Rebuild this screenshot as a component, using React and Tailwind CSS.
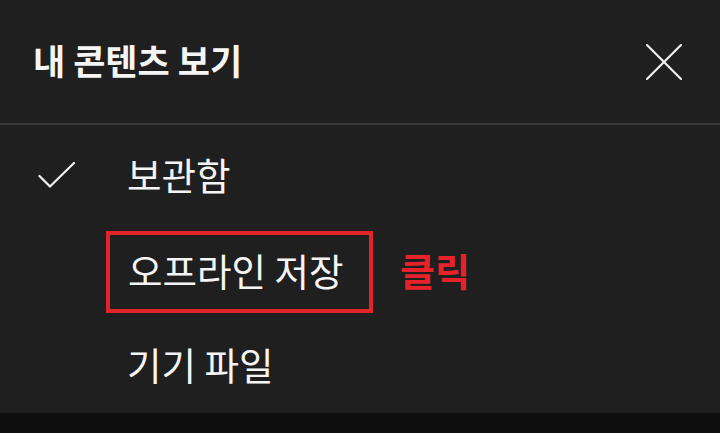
export default function App() {
  const font = { fontFamily: '"Noto Sans CJK KR", "Noto Sans", sans-serif' };
  return (
    <div className="w-[720px] h-[433px] flex flex-col bg-[#0e0e0e] overflow-hidden" style={font}>
      <div className="h-[413px] flex flex-col bg-[#1f1f1f]">
        <div className="h-[123px] flex items-center justify-between pl-[33px] pr-[38px]">
          <div className="text-[35px] font-bold text-[#f5f5f5] leading-none pb-[5px]">내 콘텐츠 보기</div>
          <svg width="36" height="36" viewBox="0 0 36 36" className="text-[#f0f0f0]">
            <path d="M1 1 L35 35 M35 1 L1 35" stroke="currentColor" strokeWidth="2.2" strokeLinecap="round" fill="none" />
          </svg>
        </div>
        <div className="h-[2px] bg-[#3a3a3a]" />
        <div className="flex flex-col pt-[3px]">
          <div className="h-[96px] flex items-center">
            <div className="w-[106px] flex items-center pl-[38px]">
              <svg width="38" height="28" viewBox="0 0 38 28" className="text-[#f0f0f0]">
                <path d="M1.5 14 L12 24.5 L36 1" stroke="currentColor" strokeWidth="2.2" strokeLinecap="round" strokeLinejoin="round" fill="none" />
              </svg>
            </div>
            <div className="pl-[21px] pb-[5px] text-[37.5px] text-[#f5f5f5] leading-none">보관함</div>
          </div>
          <div className="h-[96px] flex items-center">
            <div className="w-[106px]" />
            <div className="w-[267px] h-[82px] border-4 border-[#e3222a] flex items-center pl-[18px] pb-[5px] text-[37.5px] text-[#f5f5f5] leading-none">
              오프라인 저장
            </div>
            <div className="ml-[27px] pb-[5px] text-[38px] font-bold text-[#e8222b] leading-none">클릭</div>
          </div>
          <div className="h-[93px] flex items-center">
            <div className="w-[106px]" />
            <div className="pl-[21px] pb-[5px] text-[37.5px] text-[#f5f5f5] leading-none">기기 파일</div>
          </div>
        </div>
      </div>
    </div>
  );
}
